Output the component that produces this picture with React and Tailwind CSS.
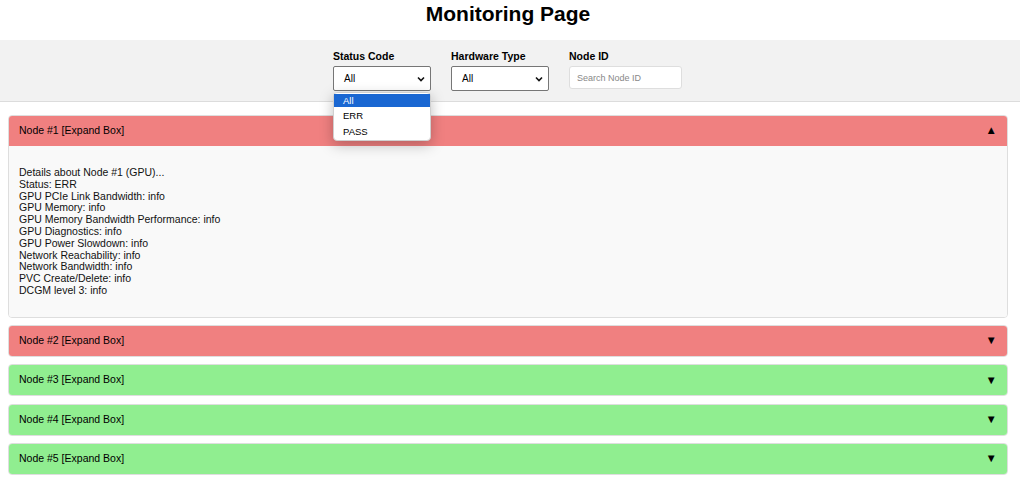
import React from "react";

const nodes = [
  { id: 1, status: "ERR", open: true },
  { id: 2, status: "ERR", open: false },
  { id: 3, status: "PASS", open: false },
  { id: 4, status: "PASS", open: false },
  { id: 5, status: "PASS", open: false },
];

const details = [
  "GPU PCIe Link Bandwidth",
  "GPU Memory",
  "GPU Memory Bandwidth Performance",
  "GPU Diagnostics",
  "GPU Power Slowdown",
  "Network Reachability",
  "Network Bandwidth",
  "PVC Create/Delete",
  "DCGM level 3",
];

const Chevron = () => (
  <svg width="8" height="6" viewBox="0 0 8 6" className="shrink-0">
    <polyline points="1,1.5 4,4.5 7,1.5" fill="none" stroke="#111" strokeWidth="1.6" />
  </svg>
);

const SelectBox = () => (
  <div className="w-[98px] h-[25px] flex items-center justify-between pl-[10px] pr-[5px] bg-white border border-[#767676] rounded-[2px] text-[10px] text-black">
    <span>All</span>
    <Chevron />
  </div>
);

const App = () => {
  return (
    <div className="min-h-[485px] bg-white text-black font-['Liberation_Sans',Arial,sans-serif]">
      {/* Title */}
      <h1 className="text-center text-[21px] font-bold leading-[24px] pt-[2px] pr-[4px] h-10">
        Monitoring Page
      </h1>

      {/* Filters */}
      <div className="bg-[#f2f2f2] border-b border-[#dcdcdc] h-[62px] pt-[10px] flex justify-center gap-5 pr-[5px]">
        <div className="flex flex-col">
          <label className="text-[10.5px] font-bold leading-[12px] mb-[4px]">Status Code</label>
          <div className="relative">
            <SelectBox />
            {/* open dropdown */}
            <div className="absolute left-0 top-[26px] w-[98px] bg-white rounded-[4px] shadow-[0_4px_14px_rgba(0,0,0,0.25)] border border-[#d0d0d0] py-[1px] z-10 text-[9.5px]">
              <div className="h-[13px] leading-[13px] pl-[9px] bg-[#1a67d2] text-white">All</div>
              <div className="h-[16px] leading-[16px] pl-[9px] mt-[1px]">ERR</div>
              <div className="h-[15px] leading-[15px] pl-[9px]">PASS</div>
            </div>
          </div>
        </div>
        <div className="flex flex-col">
          <label className="text-[10.5px] font-bold leading-[12px] mb-[4px]">Hardware Type</label>
          <SelectBox />
        </div>
        <div className="flex flex-col">
          <label className="text-[10.5px] font-bold leading-[12px] mb-[4px]">Node ID</label>
          <input
            placeholder="Search Node ID"
            className="w-[113px] h-[23px] px-[7px] bg-white border border-[#dedede] rounded-[3px] text-[9px] placeholder:text-[#888] outline-none"
          />
        </div>
      </div>

      {/* Node list */}
      <div className="flex flex-col gap-[7.3px] pt-[13px] pl-2 pr-[12px] pb-2">
        {nodes.map((n) => (
          <div key={n.id} className="border border-[#dedede] rounded-[4px] overflow-hidden">
            <div
              className={`h-[30px] flex items-center justify-between px-[10px] text-[10.5px] ${
                n.status === "ERR" ? "bg-[#f08080]" : "bg-[#90ee90]"
              }`}
            >
              <span>Node #{n.id} [Expand Box]</span>
              <span className="text-[11.5px] leading-none">{n.open ? "▲" : "▼"}</span>
            </div>
            {n.open && (
              <div className="bg-[#f9f9f9] px-[10px] pt-[21px] pb-[20px] text-[10.5px] leading-[11.8px] text-[#111]">
                <div>Details about Node #{n.id} (GPU)...</div>
                <div>Status: {n.status}</div>
                {details.map((d) => (
                  <div key={d}>{d}: info</div>
                ))}
              </div>
            )}
          </div>
        ))}
      </div>
    </div>
  );
};

export default App;
